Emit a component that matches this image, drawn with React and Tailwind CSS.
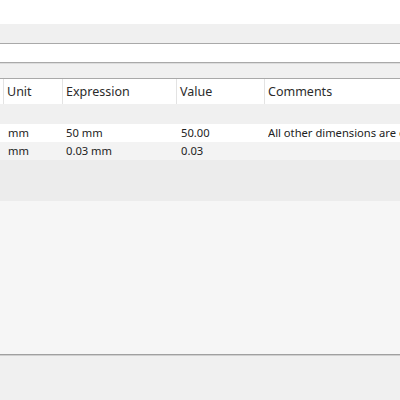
export default function App() {
  const cols = [
    { label: 'Unit', w: 'w-[59px] border-r' },
    { label: 'Expression', w: 'w-[114px] border-r' },
    { label: 'Value', w: 'w-[88px] border-r' },
    { label: 'Comments', w: 'flex-1' },
  ];
  const rows = [
    { unit: 'mm', expr: '50 mm', value: '50.00', comment: 'All other dimensions are derived from this length', bg: 'bg-white' },
    { unit: 'mm', expr: '0.03 mm', value: '0.03', comment: '', bg: 'bg-[#f3f3f3]' },
  ];

  return (
    <div className="w-[400px] h-[400px] overflow-hidden flex flex-col bg-[#f0f0f0] text-[#333]" style={{ fontFamily: '"Noto Sans", "Open Sans", sans-serif' }}>
      <div className="h-[24px] bg-white" />
      <div className="h-[19px] bg-[#f0f0f0]" />
      <div className="h-[1px] bg-[#a9a9a9]" />
      <div className="h-[18px] bg-white" />
      <div className="h-[1px] bg-[#a9a9a9]" />
      <div className="h-[15px] bg-[#f0f0f0] border-t border-[#dcdcdc]" />
      <div className="h-[1px] bg-[#a9a9a9]" />

      {/* header */}
      <div className="h-[25px] bg-white flex text-[12.5px] text-[#2b2b2b]">
        <div className="w-[4px] border-r border-[#e3e3e3]" />
        {cols.map(c => (
          <div key={c.label} className={`${c.w} border-[#e3e3e3] pl-[3px] pt-[2px] flex items-center`}>
            {c.label}
          </div>
        ))}
      </div>

      <div className="h-[20px] bg-[#f0f0f0]" />

      {rows.map((r, i) => (
        <div key={i} className={`h-[18px] ${r.bg} flex items-center text-[11.2px] text-[#222] whitespace-nowrap`}>
          <div className="w-[8px]" />
          <div className="w-[58px]">{r.unit}</div>
          <div className="w-[115px]">{r.expr}</div>
          <div className="w-[87px]">{r.value}</div>
          <div className="flex-1 overflow-hidden">{r.comment}</div>
        </div>
      ))}

      <div className="h-[41px] bg-[#ececec]" />
      <div className="h-[153px] bg-[#f6f6f6]" />
      <div className="h-[1px] bg-[#a0a0a0]" />
      <div className="h-[1px] bg-[#d0d0d0]" />
      <div className="flex-1 bg-[#f0f0f0]" />
    </div>
  );
}
